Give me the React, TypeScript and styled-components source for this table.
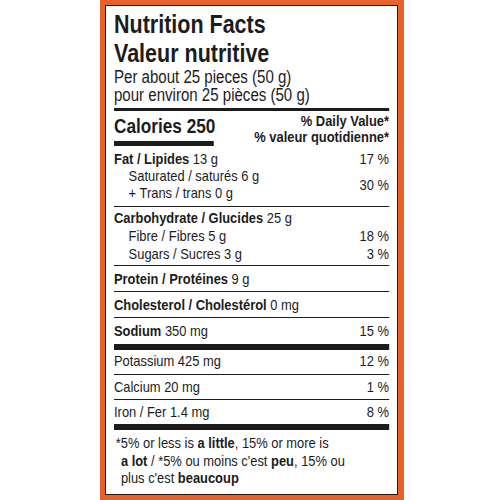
import * as React from 'react'
import styled, { createGlobalStyle } from 'styled-components'

const GlobalStyle = createGlobalStyle`
  html, body {
    margin: 0;
    padding: 0;
    background: #fff;
  }
  body {
    font-family: "Liberation Sans", Arial, Helvetica, sans-serif;
    color: #1c1c1c;
  }
`

type Nutrient = {
  name: string;
  amount: string;
  dv?: string;
  bold?: boolean;
}

// the label uses a condensed face; no narrow font is installed so the
// content column is laid out wider and squeezed back horizontally
const SQUEEZE = 0.86

const Page = styled.div`
  width: 500px;
  height: 500px;
  overflow: hidden;
  display: flex;
  justify-content: center;
`

const Frame = styled.div`
  width: 304px;
  height: 500px;
  box-sizing: border-box;
  padding: 5px 6px 5px 5px;
  margin-left: 4px;
  background: #e8622c;
`

const Label = styled.div`
  height: 100%;
  box-sizing: border-box;
  border: 1px solid #2a140c;
  background: #fff;
  padding: 4px 8px 0 8px;
`

const Content = styled.div`
  width: ${275 / SQUEEZE}px;
  transform: scaleX(${SQUEEZE});
  transform-origin: left top;
  white-space: nowrap;
`

const Title = styled.h1`
  margin: 0;
  font-size: 25px;
  line-height: 29px;
  font-weight: bold;
`

const Serving = styled.div`
  font-size: 17.5px;
  line-height: 18px;
`

const Rule = styled.div<{ $h: number; $mt?: number }>`
  height: ${p => p.$h}px;
  margin-top: ${p => p.$mt || 0}px;
  background: #1c1c1c;
`

const CaloriesRow = styled.div`
  display: flex;
  justify-content: space-between;
  align-items: flex-start;
`

const Calories = styled.div`
  margin-top: 4px;
  font-size: 20px;
  line-height: 22px;
  font-weight: bold;
`

const CalBar = styled.div`
  width: ${100 / SQUEEZE}px;
  height: 5px;
  margin-top: 4px;
  background: #1c1c1c;
`

const DvHead = styled.div`
  padding-top: 2px;
  text-align: right;
  font-size: 15px;
  line-height: 16px;
  font-weight: bold;
`

const Group = styled.div<{ $pt: number; $pb: number }>`
  padding: ${p => p.$pt}px 0 ${p => p.$pb}px;
  font-size: 15px;
  line-height: 18px;
`

const Row = styled.div<{ $indent?: boolean; $lh?: number }>`
  display: flex;
  justify-content: space-between;
  padding-left: ${p => (p.$indent ? 17 : 0)}px;
  line-height: ${p => p.$lh || 18}px;
`

const SubBlock = styled.div`
  display: flex;
  justify-content: space-between;
  align-items: center;
  padding-left: 17px;
  line-height: 17px;
`

const Name = styled.span``

const Bold = styled.b`
  font-weight: bold;
`

const Percent = styled.span`
  text-align: right;
`

const Footnote = styled.p`
  margin: 0;
  padding: 4px 0 0 8px;
  text-indent: -6px;
  font-size: 15px;
  line-height: 17.5px;
`

const singles: Nutrient[][] = [
  [{ name: 'Protein / Protéines', amount: '9 g', bold: true }],
  [{ name: 'Cholesterol / Cholestérol', amount: '0 mg', bold: true }],
  [{ name: 'Sodium', amount: '350 mg', dv: '15 %', bold: true }],
]

const minerals: Nutrient[] = [
  { name: 'Potassium', amount: '425 mg', dv: '12 %' },
  { name: 'Calcium', amount: '20 mg', dv: '1 %' },
  { name: 'Iron / Fer', amount: '1.4 mg', dv: '8 %' },
]

const NutrientRow = ({ n, indent }: { n: Nutrient; indent?: boolean }) => (
  <Row $indent={indent}>
    <Name>
      {n.bold ? <Bold>{n.name}</Bold> : n.name} {n.amount}
    </Name>
    {n.dv && <Percent>{n.dv}</Percent>}
  </Row>
)

const App = () => {
  return (
    <Page>
      <GlobalStyle />
      <Frame>
        <Label>
          <Content>
            <Title>
              Nutrition Facts
              <br />
              Valeur nutritive
            </Title>
            <Serving>
              Per about 25 pieces (50 g)
              <br />
              pour environ 25 pièces (50 g)
            </Serving>
            <Rule $h={3} $mt={4} />
            <CaloriesRow>
              <div>
                <Calories>Calories 250</Calories>
                <CalBar />
              </div>
              <DvHead>
                % Daily Value*
                <br />
                % valeur quotidienne*
              </DvHead>
            </CaloriesRow>
            <Group $pt={4} $pb={5}>
              <Row $lh={17}>
                <Name>
                  <Bold>Fat / Lipides</Bold> 13 g
                </Name>
                <Percent>17 %</Percent>
              </Row>
              <SubBlock>
                <Name>
                  Saturated / saturés 6 g
                  <br />
                  + Trans / trans 0 g
                </Name>
                <Percent>30 %</Percent>
              </SubBlock>
            </Group>
            <Rule $h={1} />
            <Group $pt={2} $pb={2}>
              <NutrientRow n={{ name: 'Carbohydrate / Glucides', amount: '25 g', bold: true }} />
              <NutrientRow n={{ name: 'Fibre / Fibres', amount: '5 g', dv: '18 %' }} indent />
              <NutrientRow n={{ name: 'Sugars / Sucres', amount: '3 g', dv: '3 %' }} indent />
            </Group>
            {singles.map((g, i) => (
              <React.Fragment key={i}>
                <Rule $h={1} />
                <Group $pt={4} $pb={i === 2 ? 4 : 3}>
                  {g.map(n => (
                    <NutrientRow key={n.name} n={n} />
                  ))}
                </Group>
              </React.Fragment>
            ))}
            <Rule $h={6} />
            {minerals.map((n, i) => (
              <React.Fragment key={n.name}>
                {i > 0 && <Rule $h={1} />}
                <Group $pt={i === 0 ? 2 : 3} $pb={i === 0 ? 4 : 3}>
                  <NutrientRow n={n} />
                </Group>
              </React.Fragment>
            ))}
            <Rule $h={6} />
            <Footnote>
              *5% or less is <Bold>a little</Bold>, 15% or more is
              <br />
              <Bold>a lot</Bold> / *5% ou moins c'est <Bold>peu</Bold>, 15% ou
              <br />
              plus c'est <Bold>beaucoup</Bold>
            </Footnote>
          </Content>
        </Label>
      </Frame>
    </Page>
  )
}

export default App
